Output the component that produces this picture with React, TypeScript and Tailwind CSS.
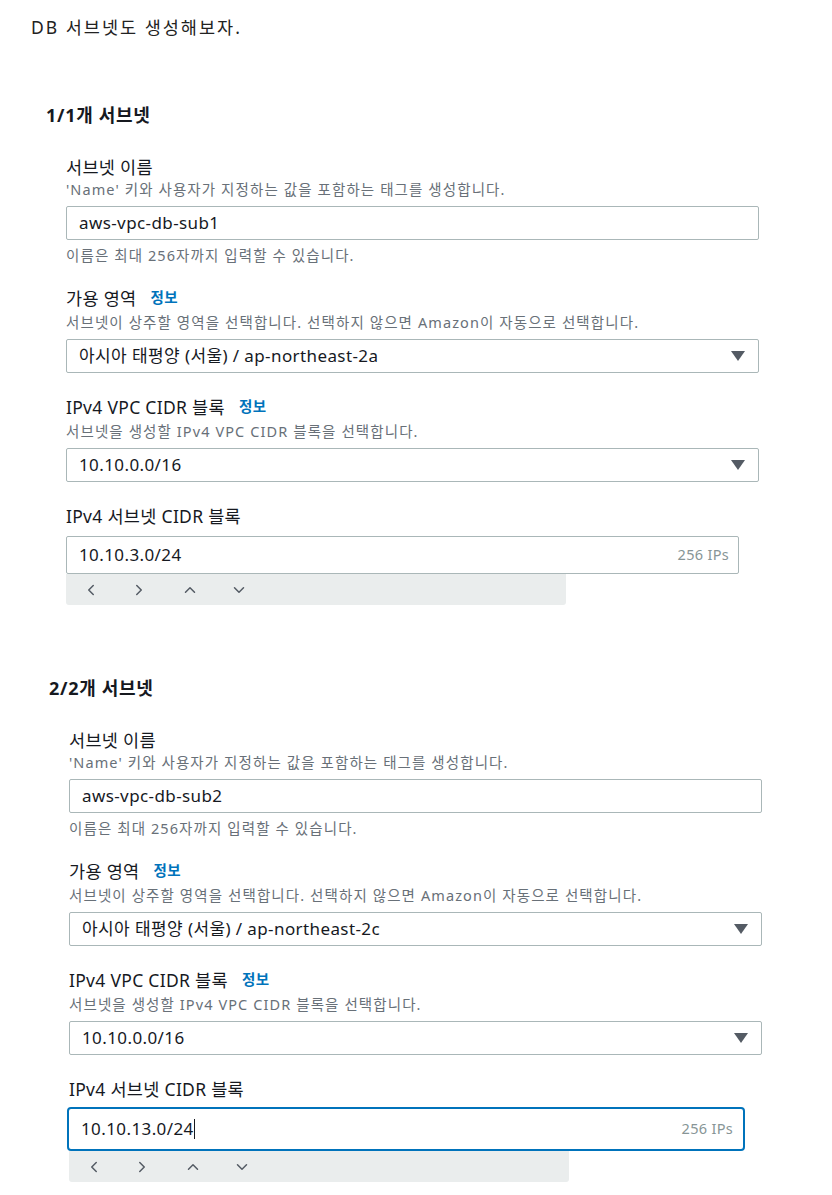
import { ChevronLeft, ChevronRight, ChevronUp, ChevronDown } from 'lucide-react'

const font = { fontFamily: '"Noto Sans", "Noto Sans CJK KR", sans-serif' }

function Label({ text, info }: { text: string; info?: boolean }) {
  return (
    <div className="flex items-center gap-[14px] h-6 text-[17.5px] tracking-[0.3px] text-[#16191f]">
      <span>{text}</span>
      {info && <span className="text-[14.5px] font-bold tracking-[0.5px] text-[#0073bb]">정보</span>}
    </div>
  )
}

function Desc({ text }: { text: string }) {
  return <p className="h-5 leading-5 text-[14.5px] tracking-[1.1px] text-[#687078]">{text}</p>
}

function Select({ value }: { value: string }) {
  return (
    <div className="flex items-center justify-between h-[34px] border border-[#aab7b8] rounded-[2px] pl-3 pr-[13px] text-[17px] tracking-[0.4px] text-[#16191f]">
      <span>{value}</span>
      <svg width="14" height="10" viewBox="0 0 14 10">
        <path d="M0 0 H14 L7 10 Z" fill="#545b64" />
      </svg>
    </div>
  )
}

function Stepper() {
  return (
    <div className="flex items-center h-[31px] w-[500px] bg-[#eaeded] rounded-b-[3px] text-[#545b64] pl-[16px]">
      <ChevronLeft size={18} strokeWidth={2} />
      <span className="w-[30px]" />
      <ChevronRight size={18} strokeWidth={2} />
      <span className="w-[33px]" />
      <ChevronUp size={18} strokeWidth={2} />
      <span className="w-[31px]" />
      <ChevronDown size={18} strokeWidth={2} />
    </div>
  )
}

function Subnet({ title, name, az, cidr, focused }: { title: string; name: string; az: string; cidr: string; focused?: boolean }) {
  return (
    <section>
      <h2 className="h-6 leading-6 text-[18px] tracking-[0.7px] font-bold text-[#16191f]">{title}</h2>
      <div className="pl-5 pt-[28px]">
        <Label text="서브넷 이름" />
        <Desc text="'Name' 키와 사용자가 지정하는 값을 포함하는 태그를 생성합니다." />
        <div className="mt-[7px] h-[34px] w-[693px] border border-[#aab7b8] rounded-[2px] pl-3 flex items-center text-[17px] tracking-[0.4px] text-[#16191f]">
          {name}
        </div>
        <p className="mt-[5px] h-5 leading-5 text-[14.5px] tracking-[1.1px] text-[#687078]">이름은 최대 256자까지 입력할 수 있습니다.</p>

        <div className="mt-[21px]">
          <Label text="가용 영역" info />
        </div>
        <div className="mt-[2px]">
          <Desc text="서브넷이 상주할 영역을 선택합니다. 선택하지 않으면 Amazon이 자동으로 선택합니다." />
        </div>
        <div className="mt-[7px] w-[693px]">
          <Select value={az} />
        </div>

        <div className="mt-[22px]">
          <Label text="IPv4 VPC CIDR 블록" info />
        </div>
        <div className="mt-[2px]">
          <Desc text="서브넷을 생성할 IPv4 VPC CIDR 블록을 선택합니다." />
        </div>
        <div className="mt-[7px] w-[693px]">
          <Select value="10.10.0.0/16" />
        </div>

        <div className="mt-[22px]">
          <Label text="IPv4 서브넷 CIDR 블록" />
        </div>
        <div
          className={
            focused
              ? 'mt-[6px] h-[44px] w-[678px] -ml-[2px] border-2 border-[#0073bb] rounded-[4px] pl-3 pr-[10px] flex items-center justify-between text-[17px] tracking-[0.4px] text-[#16191f]'
              : 'mt-[8px] h-[38px] w-[673px] border border-[#aab7b8] rounded-[2px] pl-3 pr-[9px] flex items-center justify-between text-[17px] tracking-[0.4px] text-[#16191f]'
          }
        >
          <span className="flex items-center">
            {cidr}
            {focused && <span className="inline-block w-px h-[20px] bg-[#16191f]" />}
          </span>
          <span className="text-[14.5px] tracking-[0.3px] text-[#879596]">256 IPs</span>
        </div>
        <Stepper />
      </div>
    </section>
  )
}

export default function App() {
  return (
    <div className="bg-white w-[832px] h-[1195px] overflow-hidden" style={font}>
      <p className="pl-[31px] pt-[17px] h-[37px] leading-5 text-[17.5px] tracking-[2px] text-[#222]">DB 서브넷도 생성해보자.</p>

      <div className="pl-[46px] pt-[66px]">
        <Subnet title="1/1개 서브넷" name="aws-vpc-db-sub1" az="아시아 태평양 (서울) / ap-northeast-2a" cidr="10.10.3.0/24" />
      </div>

      <div className="pl-[49px] pt-[71px]">
        <Subnet title="2/2개 서브넷" name="aws-vpc-db-sub2" az="아시아 태평양 (서울) / ap-northeast-2c" cidr="10.10.13.0/24" focused />
      </div>
    </div>
  )
}
